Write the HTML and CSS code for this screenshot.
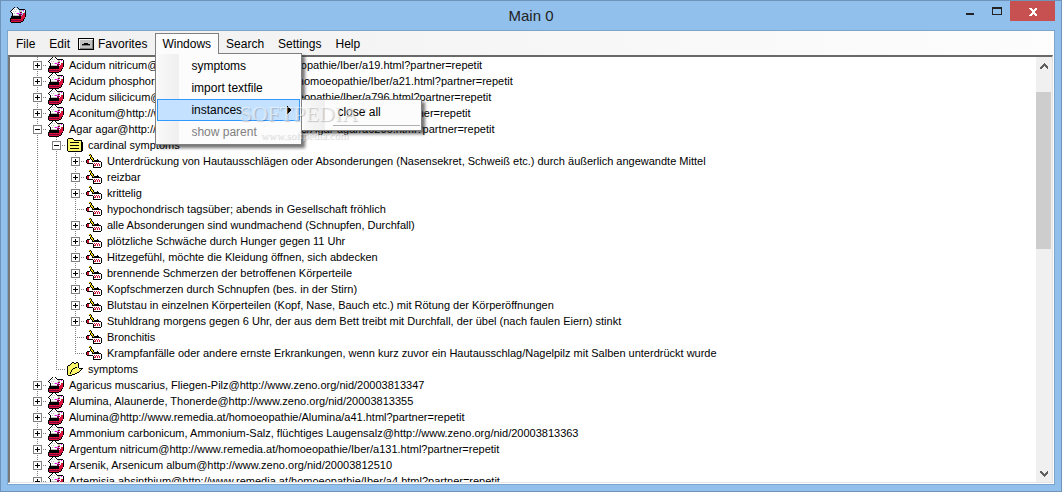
FILE: index.html
```
<!DOCTYPE html>
<html lang="de">
<head>
<meta charset="utf-8">
<title>Main 0</title>
<link rel="stylesheet" href="styles.css">
</head>
<body>

<!-- icons -->
<svg class="defs" width="0" height="0" aria-hidden="true">
	<symbol id="i-box" viewBox="0 0 16 16">
		<path fill="#000" d="M1 9h10v2H1zM0 11h11v1H0zM0 12h1v3H0zM1 15h10v1H1zM11 14h2v1h-2zM13 12h1v2h-1zM14 11h1v1h-1zM15 3h1v7h-1zM9 2h6v1H9zM4 0h1v1H4zM7 0h1v1H7zM8 1h1v1H8zM3 1h1v1H3zM2 2h1v1H2zM1 3h1v1H1zM0 4h1v1H0zM1 5h1v1H1zM2 6h1v3H2z"/>
		<path fill="#fff" d="M1 4h1V3h1V2h1V1h3v1h1v1h1v4H8v1H3V6H2V5H1z"/>
		<path fill="#c0c0c0" d="M4 2h1v1H4zM6 2h1v1H6zM3 4h1v1H3zM5 4h1v1H5zM4 6h1v1H4zM6 6h1v1H6zM3 8h6v1H3zM10 3h2v2h-2zM9 5h1v2H9z"/>
		<path fill="#800040" d="M9 7h3v1h-1v1H9zM10 5h2v1h-2zM1 13h10v1H1z"/>
		<path fill="#f0f" d="M7 6h2v1H7zM13 3h1v1h-1zM10 6h1v1h-1z"/>
		<path fill="#d8143c" d="M1 12h10v1H1zM1 14h10v1H1zM11 9h1V8h1V6h2v5h-1v1h-1v2h-2z"/>
		<path fill="#fff" d="M12 4h1v2h-1zM14 3h1v2h-1zM13 5h1v1h-1z"/>
	</symbol>
	<symbol id="i-sheet" viewBox="0 0 16 16">
		<path fill="#fbf56a" d="M1 2h5l1 2h7v10H1z"/>
		<path fill="#000" d="M1 1h5v1H1zM0 2h1v12H0zM6 2h1v1H6zM7 3h7v1H7zM14 3h1v12h-1zM1 14h14v1H1zM15 5h1v9h-1zM3 5h9v1H3zM3 8h9v1H3zM3 11h9v1H3z"/>
	</symbol>
	<symbol id="i-pen" viewBox="0 0 16 16">
		<path fill="#fff" d="M8 9h6v1h1v4H8z"/>
		<path fill="#000" d="M4 1h1v1H4zM5 2h1v2H5zM6 4h1v1H6zM7 5h1v2H7zM8 7h1v1H8zM3 2h1v1H3zM4 4h1v2H4zM5 6h1v1H5zM1 6h3v1H1zM0 7h1v3H0zM1 10h4v1H1zM5 8h10v1H5zM5 10h2v1H5zM9 7h4v1H9zM7 11h1v3H7zM7 14h8v1H7zM15 9h1v5h-1zM6 7h1v1H6zM11 6h1v1h-1z"/>
		<path fill="#c41230" d="M1 7h2v3H1zM8 10h1v1H8zM9 11h1v2H9zM10 10h1v1h-1zM11 11h1v2h-1zM12 10h1v1h-1zM13 11h1v2h-1zM8 12h1v1H8z"/>
		<path fill="#fff" d="M3 7h2v1h1v1H3zM3 9h4v1H3z"/>
		<path fill="#f5e000" d="M3 1h1v1H3zM4 2h1v2H4zM5 4h1v2H5zM6 5h1v2H6zM7 7h1v1H7z"/>
	</symbol>
	<symbol id="i-folder" viewBox="0 0 16 16">
		<path fill="#fbf56a" d="M1 5h2V4h1V3h1V2h6v6h3v1h-1v1h-1v1h-2v1H8v1H5v1H1z"/>
		<path fill="#000" d="M0 5h1v9H0zM1 4h2v1H1zM3 3h1v1H3zM4 2h1v1H4zM5 1h2v1H5zM7 2h2v1H7zM9 1h2v1H9zM11 2h1v5h-1zM12 7h4v1h-4zM14 8h1v1h-1zM13 9h1v1h-1zM12 10h1v1h-1zM10 11h2v1h-2zM8 12h2v1H8zM5 13h3v1H5zM1 14h4v1H1zM5 8h1v1H5zM4 9h1v2H4zM3 11h1v2H3zM6 7h2v1H6zM8 6h2v1H8z"/>
	</symbol>
</svg>

<header class="titlebar">
	<svg class="icon"><use href="#i-box"/></svg>
	<h1>Main 0</h1>
	<div class="winbuttons">
		<button class="winbtn" aria-label="Minimize"><svg width="8" height="14"><path d="M0 11h8v2H0z"/></svg></button>
		<button class="winbtn max" aria-label="Maximize"><svg width="10" height="14"><path fill-rule="evenodd" d="M0 5h10v8H0zM1 7v5h8V7z"/></svg></button>
		<button class="winbtn close" aria-label="Close"><svg width="8" height="8"><path d="M0 0h2l2 2 2-2h2v1L5 4l3 3v1H6L4 6 2 8H0V7l3-3-3-3z"/></svg></button>
	</div>
</header>

<main class="client">
	<nav class="menubar">
		<button>File</button>
		<button>Edit</button>
		<button class="fav"><svg width="16" height="12"><path fill="#000" d="M0 0h16v12H0z"/><path fill="#f4f4f4" d="M1 1h14v1H2v9H1z"/><path fill="#c0c0c0" d="M2 2h12v8H2z"/><path fill="#808080" d="M14 2h1v9H2v-1h12zM4 7h8v1H4z"/><path fill="#000" d="M4 6h8v1H4zM6 5h4v1H6z"/></svg>Favorites</button>
		<div class="menu">
			<button class="open" aria-expanded="true">Windows</button>
			<div class="popup">
				<button>symptoms</button>
				<button>import textfile</button>
				<div class="sub">
					<button class="selected">instances<svg width="4" height="8"><path d="M0 0l4 4-4 4z"/></svg></button>
					<div class="popup side">
						<button>close all</button>
						<hr>
					</div>
				</div>
				<button disabled>show parent</button>
			</div>
			<div class="mark"><b>SOFTPEDIA<sup>™</sup></b><span>www.softpedia.com</span></div>
		</div>
		<button>Search</button>
		<button>Settings</button>
		<button>Help</button>
	</nav>

	<div class="pane">
		<ul class="tree">
			<li><div class="row"><button class="exp" aria-label="expand"></button><svg class="icon"><use href="#i-box"/></svg>Acidum nitricum@http://www.remedia.at/homoeopathie/Iber/a19.html?partner=repetit</div></li>
			<li><div class="row"><button class="exp" aria-label="expand"></button><svg class="icon"><use href="#i-box"/></svg>Acidum phosphoricum@http://www.remedia.at/homoeopathie/Iber/a21.html?partner=repetit</div></li>
			<li><div class="row"><button class="exp" aria-label="expand"></button><svg class="icon"><use href="#i-box"/></svg>Acidum silicicum@http://www.remedia.at/homoeopathie/Iber/a796.html?partner=repetit</div></li>
			<li><div class="row"><button class="exp" aria-label="expand"></button><svg class="icon"><use href="#i-box"/></svg>Aconitum@http://www.remedia.at/homoeopathie/Aconitum/a9.html?partner=repetit</div></li>
			<li><div class="row"><button class="exp minus" aria-label="collapse"></button><svg class="icon"><use href="#i-box"/></svg>Agar agar@http://www.remedia.at/homoeopathie/Agar-agar/a6206.html?partner=repetit</div>
				<ul>
					<li><div class="row"><button class="exp minus" aria-label="collapse"></button><svg class="icon"><use href="#i-sheet"/></svg>cardinal symptoms</div>
						<ul>
							<li><div class="row"><button class="exp" aria-label="expand"></button><svg class="icon"><use href="#i-pen"/></svg>Unterdrückung von Hautausschlägen oder Absonderungen (Nasensekret, Schweiß etc.) durch äußerlich angewandte Mittel</div></li>
							<li><div class="row"><button class="exp" aria-label="expand"></button><svg class="icon"><use href="#i-pen"/></svg>reizbar</div></li>
							<li><div class="row"><button class="exp" aria-label="expand"></button><svg class="icon"><use href="#i-pen"/></svg>krittelig</div></li>
							<li><div class="row"><span class="exp leaf"></span><svg class="icon"><use href="#i-pen"/></svg>hypochondrisch tagsüber; abends in Gesellschaft fröhlich</div></li>
							<li><div class="row"><button class="exp" aria-label="expand"></button><svg class="icon"><use href="#i-pen"/></svg>alle Absonderungen sind wundmachend (Schnupfen, Durchfall)</div></li>
							<li><div class="row"><button class="exp" aria-label="expand"></button><svg class="icon"><use href="#i-pen"/></svg>plötzliche Schwäche durch Hunger gegen 11 Uhr</div></li>
							<li><div class="row"><button class="exp" aria-label="expand"></button><svg class="icon"><use href="#i-pen"/></svg>Hitzegefühl, möchte die Kleidung öffnen, sich abdecken</div></li>
							<li><div class="row"><button class="exp" aria-label="expand"></button><svg class="icon"><use href="#i-pen"/></svg>brennende Schmerzen der betroffenen Körperteile</div></li>
							<li><div class="row"><button class="exp" aria-label="expand"></button><svg class="icon"><use href="#i-pen"/></svg>Kopfschmerzen durch Schnupfen (bes. in der Stirn)</div></li>
							<li><div class="row"><button class="exp" aria-label="expand"></button><svg class="icon"><use href="#i-pen"/></svg>Blutstau in einzelnen Körperteilen (Kopf, Nase, Bauch etc.) mit Rötung der Körperöffnungen</div></li>
							<li><div class="row"><button class="exp" aria-label="expand"></button><svg class="icon"><use href="#i-pen"/></svg>Stuhldrang morgens gegen 6 Uhr, der aus dem Bett treibt mit Durchfall, der übel (nach faulen Eiern) stinkt</div></li>
							<li><div class="row"><span class="exp leaf"></span><svg class="icon"><use href="#i-pen"/></svg>Bronchitis</div></li>
							<li><div class="row"><span class="exp leaf"></span><svg class="icon"><use href="#i-pen"/></svg>Krampfanfälle oder andere ernste Erkrankungen, wenn kurz zuvor ein Hautausschlag/Nagelpilz mit Salben unterdrückt wurde</div></li>
						</ul>
					</li>
					<li><div class="row"><span class="exp leaf"></span><svg class="icon"><use href="#i-folder"/></svg>symptoms</div></li>
				</ul>
			</li>
			<li><div class="row"><button class="exp" aria-label="expand"></button><svg class="icon"><use href="#i-box"/></svg>Agaricus muscarius, Fliegen-Pilz@http://www.zeno.org/nid/20003813347</div></li>
			<li><div class="row"><button class="exp" aria-label="expand"></button><svg class="icon"><use href="#i-box"/></svg>Alumina, Alaunerde, Thonerde@http://www.zeno.org/nid/20003813355</div></li>
			<li><div class="row"><button class="exp" aria-label="expand"></button><svg class="icon"><use href="#i-box"/></svg>Alumina@http://www.remedia.at/homoeopathie/Alumina/a41.html?partner=repetit</div></li>
			<li><div class="row"><button class="exp" aria-label="expand"></button><svg class="icon"><use href="#i-box"/></svg>Ammonium carbonicum, Ammonium-Salz, flüchtiges Laugensalz@http://www.zeno.org/nid/20003813363</div></li>
			<li><div class="row"><button class="exp" aria-label="expand"></button><svg class="icon"><use href="#i-box"/></svg>Argentum nitricum@http://www.remedia.at/homoeopathie/Iber/a131.html?partner=repetit</div></li>
			<li><div class="row"><button class="exp" aria-label="expand"></button><svg class="icon"><use href="#i-box"/></svg>Arsenik, Arsenicum album@http://www.zeno.org/nid/20003812510</div></li>
			<li><div class="row"><button class="exp" aria-label="expand"></button><svg class="icon"><use href="#i-box"/></svg>Artemisia absinthium@http://www.remedia.at/homoeopathie/Iber/a4.html?partner=repetit</div></li>
			<li></li>
		</ul>
		<div class="scrollbar">
			<button aria-label="Scroll up"><svg width="8" height="6"><path d="M0 4l4-4 4 4v2H7L4 3 1 6H0z"/></svg></button>
			<div class="track"><div class="thumb"></div></div>
			<button aria-label="Scroll down"><svg width="8" height="6"><path d="M0 2l4 4 4-4V0H7L4 3 1 0H0z"/></svg></button>
		</div>
	</div>
</main>

</body>
</html>
```
FILE: styles.css
```
* {
	box-sizing: border-box;
}

body {
	margin: 0;
	height: 100vh;
	display: flex;
	flex-direction: column;
	padding: 0 6px 6px;
	border: 1px solid #6f93b9;
	background: #91c0ec;
	font-family: "Liberation Sans", Arial, sans-serif;
	font-size: 12px;
	color: #000;
	overflow: hidden;
}

button {
	border: 0;
	padding: 0;
	margin: 0;
	background: none;
	font: inherit;
	color: inherit;
}

svg {
	flex: none;
	shape-rendering: crispEdges;
}

.defs {
	position: absolute;
}

.icon {
	width: 16px;
	height: 16px;
}

/* title bar */
.titlebar {
	display: grid;
	grid-template-columns: 1fr auto 1fr;
	height: 29px;
	flex: none;
}

.titlebar .icon {
	margin: 6px 3px;
}

.titlebar h1 {
	margin: 0;
	font-size: 15px;
	line-height: 29px;
	font-weight: normal;
	color: #222;
}

.winbuttons {
	display: flex;
	justify-content: flex-end;
	align-items: flex-start;
}

.winbtn {
	width: 27px;
	height: 20px;
	display: flex;
	align-items: flex-start;
	justify-content: center;
	fill: #222;
}

.winbtn svg {
	margin-top: 1px;
}

.winbtn.close {
	width: 45px;
	align-items: center;
	background: #c75050;
	fill: #fff;
}

.client {
	flex: 1;
	min-height: 0;
	display: flex;
	flex-direction: column;
	border: 1px solid #7ba5cd;
	background: #fff;
}

/* menu */
.menubar {
	display: flex;
	height: 24px;
	flex: none;
	padding: 2px 1px 0;
	background: linear-gradient(to right, #f0f0f0, #fdfdfd);
}

.menubar > button,
.open {
	height: 22px;
	padding: 0 7px;
	line-height: 22px;
}

.menubar > .fav {
	display: flex;
	align-items: center;
	gap: 4px;
	padding: 0 8px 0 1px;
}

.menu {
	position: relative;
}

.menu .open {
	position: relative;
	z-index: 3;
	height: 21px;
	padding: 0 7px 0 6px;
	border: 1px solid #808080;
	border-bottom: 0;
	line-height: 20px;
	background: #fcfcfc;
}

.popup {
	position: absolute;
	z-index: 2;
	left: 0;
	top: 20px;
	width: 147px;
	padding: 1px;
	border: 1px solid #808080;
	background: linear-gradient(to right, #fcfcfc 2px, #f8f8f8 2px, #efefef 23px, #fcfcfc 23px);
	box-shadow: 3px 3px 3px rgba(0, 0, 0, 0.55);
}

.popup button {
	display: flex;
	align-items: center;
	justify-content: space-between;
	width: 100%;
	height: 22px;
	padding: 0 9px 0 34px;
}

.popup button:disabled {
	color: #808080;
}

.popup .selected {
	padding: 0 8px 0 33px;
	border: 1px solid #3399ff;
	background: #c4e1ff;
}

.sub {
	position: relative;
}

.popup.side {
	left: 144px;
	top: 0;
	width: 121px;
	height: 32px;
}

.popup hr {
	margin: 2px 0 0 30px;
	border: 0;
	border-top: 1px solid #b0b0b0;
}

.mark {
	position: absolute;
	z-index: 4;
	left: 84px;
	top: 68px;
	width: 140px;
	font-family: "Liberation Serif", serif;
	color: rgba(255, 255, 255, 0.55);
	text-shadow: 1px 1px 1px rgba(0, 0, 0, 0.2);
	pointer-events: none;
}

.mark b {
	display: block;
	font-size: 22px;
	line-height: 26px;
	font-weight: normal;
}

.mark sup {
	font-size: 8px;
	line-height: 8px;
}

.mark span {
	display: block;
	padding-left: 21px;
	font-size: 11px;
	line-height: 16px;
}

/* tree */
.pane {
	flex: 1;
	min-height: 0;
	display: flex;
	margin-bottom: 1px;
	margin-right: 1px;
	border: 1px solid #e3e3e3;
	border-top: 2px solid #696969;
	border-left: 2px solid #777;
	overflow: hidden;
}

.tree {
	flex: 1;
	min-width: 0;
	padding-left: 18px;
	overflow: hidden;
	font-size: 11px;
}

ul {
	margin: 0;
	padding: 0;
	list-style: none;
}

li {
	background: repeating-linear-gradient(#808080 0 1px, transparent 1px 2px) 9px 0 / 1px 100% no-repeat;
}

li:last-child {
	background-size: 1px 8px;
}

li ul {
	padding-left: 19px;
}

.row {
	display: flex;
	align-items: center;
	height: 16px;
	white-space: nowrap;
}

.row .icon {
	margin: 0 5px 0 1px;
}

.exp {
	width: 19px;
	height: 16px;
	flex: none;
	background:
		linear-gradient(#000, #000) 7px 8px / 5px 1px no-repeat,
		linear-gradient(#000, #000) 9px 6px / 1px 5px no-repeat,
		linear-gradient(#fff, #fff) 6px 5px / 7px 7px no-repeat,
		linear-gradient(#808080, #808080) 5px 4px / 9px 9px no-repeat,
		repeating-linear-gradient(to right, #808080 0 1px, transparent 1px 2px) 9px 8px / 10px 1px no-repeat;
}

.exp.minus {
	background:
		linear-gradient(#000, #000) 7px 8px / 5px 1px no-repeat,
		linear-gradient(#fff, #fff) 6px 5px / 7px 7px no-repeat,
		linear-gradient(#808080, #808080) 5px 4px / 9px 9px no-repeat,
		repeating-linear-gradient(to right, #808080 0 1px, transparent 1px 2px) 9px 8px / 10px 1px no-repeat;
}

.exp.leaf {
	background: repeating-linear-gradient(to right, #808080 0 1px, transparent 1px 2px) 9px 8px / 10px 1px no-repeat;
}

/* scrollbar */
.scrollbar {
	width: 16px;
	flex: none;
	display: flex;
	flex-direction: column;
	background: #f0f0f0;
}

.scrollbar button {
	height: 17px;
	display: flex;
	align-items: center;
	justify-content: center;
	fill: #606060;
}

.track {
	flex: 1;
	padding-top: 18px;
}

.thumb {
	height: 42%;
	width: 15px;
	background: #cdcdcd;
}
```
